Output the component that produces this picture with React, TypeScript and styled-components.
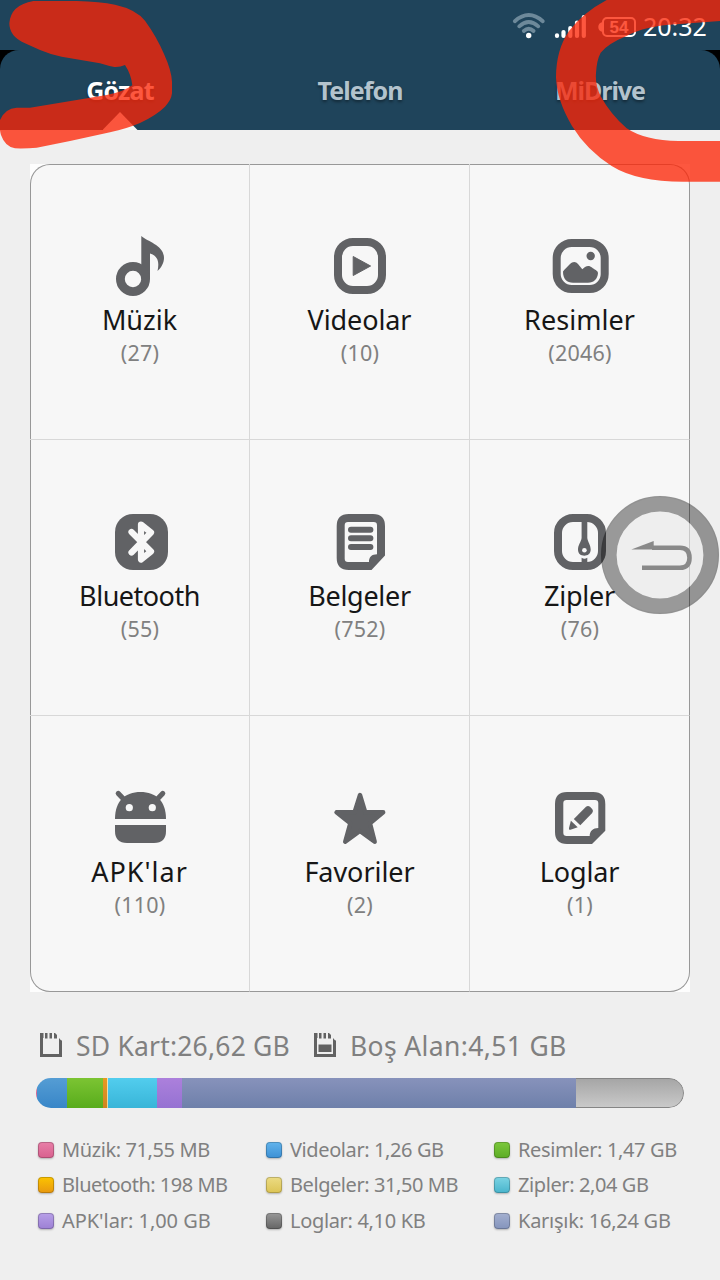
import React from "react";
import styled, { createGlobalStyle } from "styled-components";

const GlobalStyle = createGlobalStyle`
  * { box-sizing: border-box; }
  body { margin: 0; background: #efefef; font-family: "Noto Sans", "Open Sans", sans-serif; }
`;

const INK = "#616265";
const PAPER = "#f7f7f7";

const Screen = styled.div`
  position: relative;
  width: 720px;
  height: 1280px;
  overflow: hidden;
  background: #efefef;
`;

const StatusBar = styled.header`
  display: flex;
  justify-content: flex-end;
  height: 50px;
  padding-right: 11px;
  background: #1f445b;
`;

const StatusIcons = styled.svg`
  display: block;
  width: 130px;
  height: 50px;
`;

const Clock = styled.span`
  width: 66px;
  margin-left: 1px;
  font-size: 25px;
  line-height: 52px;
  color: #fff;
  white-space: nowrap;
`;

const TabBack = styled.div`
  height: 80px;
  background: #000;
`;

const Tabs = styled.nav`
  display: grid;
  grid-template-columns: repeat(3, 240px);
  height: 80px;
  border-radius: 19px 19px 0 0;
  background: #1f445b;
`;

const Tab = styled.div<{ $active?: boolean; $ls: number }>`
  display: flex;
  flex-direction: column;
  align-items: center;
  justify-content: space-between;
  padding-top: 20px;
  font-size: 25px;
  font-weight: 700;
  line-height: 40px;
  letter-spacing: ${(p) => p.$ls}px;
  color: ${(p) => (p.$active ? "#fff" : "#b3c3cd")};
  text-shadow: 0 2px 3px rgba(0, 0, 0, 0.4);
`;

const Pointer = styled.div`
  width: 35px;
  height: 18px;
  background: #f6f6f6;
  clip-path: polygon(50% 0, 100% 100%, 0 100%);
`;

const PanelBack = styled.main`
  width: 660px;
  margin: 34px auto 0;
  background: #fdfdfd;
`;

const Panel = styled.div`
  display: grid;
  grid-template-columns: repeat(3, 220px);
  grid-auto-rows: 276px;
  border-radius: 20px;
  background: ${PAPER};
  box-shadow: inset 0 0 0 1px #989898;
`;

const Tile = styled.div<{ $right: boolean; $bottom: boolean }>`
  display: flex;
  flex-direction: column;
  align-items: center;
  padding-top: 70px;
  border-right: 1px solid ${(p) => (p.$right ? "#d8d8d8" : "transparent")};
  border-bottom: 1px solid ${(p) => (p.$bottom ? "#d8d8d8" : "transparent")};
`;

const TileIcon = styled.svg`
  display: block;
  width: 64px;
  height: 64px;
`;

const TileName = styled.div<{ $ls: number }>`
  margin-top: 2px;
  font-size: 27px;
  line-height: 40px;
  letter-spacing: ${(p) => p.$ls}px;
  color: #161616;
`;

const TileCount = styled.div`
  padding-left: 1px;
  font-size: 21.5px;
  line-height: 26px;
  letter-spacing: 0.2px;
  color: #808080;
`;

const Totals = styled.section`
  display: flex;
  padding: 34px 0 0 39px;
`;

const Total = styled.div<{ $w: number; $ls: number }>`
  display: flex;
  gap: 13px;
  width: ${(p) => p.$w}px;
  font-size: 26.5px;
  line-height: 40px;
  letter-spacing: ${(p) => p.$ls}px;
  color: #808080;
  white-space: nowrap;
`;

const CardSvg = styled.svg`
  display: block;
  flex: none;
  width: 24px;
  height: 26px;
  margin-top: 6px;
`;

const UsageBar = styled.div`
  display: flex;
  width: 648px;
  height: 30px;
  margin: 12px 0 0 36px;
  border-radius: 15px;
  overflow: hidden;
`;

const Segment = styled.div<{ $w: number; $from: string; $to: string }>`
  width: ${(p) => p.$w}px;
  flex: none;
  background: linear-gradient(${(p) => p.$from}, ${(p) => p.$to});
`;

const FreeSegment = styled.div`
  flex: 1;
  border: 1px solid #858585;
  border-left: 0;
  border-radius: 0 15px 15px 0;
  background: linear-gradient(#a6a6a6, #c9c9c9);
`;

const Legend = styled.section`
  display: grid;
  grid-template-columns: repeat(3, 228px);
  grid-auto-rows: 35.5px;
  padding: 24px 0 0 38px;
`;

const LegendItem = styled.div<{ $ls: number }>`
  display: flex;
  align-items: center;
  gap: 8px;
  font-size: 20px;
  line-height: 34px;
  letter-spacing: ${(p) => p.$ls}px;
  color: #808080;
  white-space: nowrap;
`;

const Swatch = styled.i<{ $from: string; $to: string }>`
  width: 16px;
  height: 16px;
  border-radius: 4px;
  background: linear-gradient(${(p) => p.$from}, ${(p) => p.$to});
  box-shadow: inset 0 0 0 1px rgba(0, 0, 0, 0.2), 0 1px 2px rgba(0, 0, 0, 0.25);
`;

const FloatingBack = styled.svg`
  position: absolute;
  left: 600px;
  top: 495px;
  width: 120px;
  height: 120px;
`;

const Marker = styled.svg`
  position: absolute;
  left: 0;
  top: 0;
  width: 720px;
  height: 190px;
  pointer-events: none;
`;

const ring = { fill: "none", stroke: INK, strokeWidth: 8 };

const icons: Record<string, React.ReactNode> = {
  music: (
    <g fill={INK}>
      <path d="M33.3 2C40 8 56 11 56 24C56 29 53 34 49.5 37C51.5 28 50 22 42 19.5V45H33.3Z" />
      <circle cx="25" cy="45" r="12.6" fill="none" stroke={INK} strokeWidth="8.8" />
    </g>
  ),
  video: (
    <g>
      <rect x="10" y="8" width="44" height="48" rx="15" {...ring} />
      <path d="M25.2 22.5L42.6 32L25.2 41.5Z" fill={INK} stroke={INK} strokeWidth="1" strokeLinejoin="round" />
    </g>
  ),
  image: (
    <g>
      <rect x="8.7" y="9" width="48" height="46" rx="15" {...ring} />
      <circle cx="42.7" cy="22" r="4.2" fill={INK} />
      <path
        fill={INK}
        d="M15 37.5C16.5 35 19.5 33 22 30C24.5 27.2 28 27.2 30 30L34.3 35.2L37 33C39.5 31.4 42 31.7 44 33.5C46 35.5 50 36.5 50 39C49.5 45 46 48.7 40 48.7H25C19 48.7 15 45.5 15 37.5Z"
      />
    </g>
  ),
  bluetooth: (
    <g>
      <rect x="7" y="4" width="53" height="56" rx="18" fill={INK} />
      <path
        d="M23.5 22L43 41.5L33 49.5V14.5L43 22.5L23.5 42.5"
        fill="none"
        stroke={PAPER}
        strokeWidth="6.2"
        strokeLinecap="round"
        strokeLinejoin="round"
      />
    </g>
  ),
  document: (
    <g>
      <path
        fillRule="evenodd"
        fill={INK}
        d="M20.7 4H45Q57 4 57 16V45.5L43.5 60H20.7Q8.7 60 8.7 48V16Q8.7 4 20.7 4ZM20 12Q16.7 12 16.7 15.3V48.7Q16.7 52 20 52H41C40.8 47 44 44.3 49 44.3V15.3Q49 12 45.7 12Z"
      />
      <path d="M23 19.7H42.4M23 28.3H42.4M23 37H42.4" stroke={INK} strokeWidth="6" strokeLinecap="round" />
    </g>
  ),
  zip: (
    <g>
      <rect x="10" y="8" width="44" height="48" rx="15" {...ring} />
      <path
        fill={INK}
        d="M33.6 11H39.3V28C39.8 32 42.7 35 42.7 39.5C42.7 44 39.5 45.7 36.4 45.7C33 45.7 30 44 30 39.5C30 35 33.1 32 33.6 28Z"
      />
      <circle cx="36.4" cy="40.3" r="2.3" fill={PAPER} />
      <path fill={INK} d="M33.6 47.8Q36.4 49.5 39.3 47.8V53H33.6Z" />
    </g>
  ),
  android: (
    <g fill={INK}>
      <path d="M7 33C7 15 17 6 32.5 6C48 6 58 15 58 33Z" />
      <path d="M7 39H58V45Q58 57 46 57H19Q7 57 7 45Z" />
      <path d="M10.3 7.5L17 14.5M54.7 7.5L48 14.5" stroke={INK} strokeWidth="5.2" strokeLinecap="round" />
      <circle cx="21.3" cy="21.7" r="3.6" fill={PAPER} />
      <circle cx="44.3" cy="21.7" r="3.6" fill={PAPER} />
    </g>
  ),
  star: (
    <path
      fill={INK}
      stroke={INK}
      strokeWidth="4.4"
      strokeLinejoin="round"
      d="M32 9L37.3 26.3H55.2L42 37.3L46.7 55.8L31.9 45L17.2 55.8L22.3 37.3L8.5 26.3H26.5Z"
    />
  ),
  log: (
    <g fill={INK}>
      <path
        fillRule="evenodd"
        d="M19 6H45.3Q57.3 6 57.3 18V44.7L44 58H19Q7 58 7 46V18Q7 6 19 6ZM18.6 14Q15.3 14 15.3 17.3V46.7Q15.3 50 18.6 50H41.7C41.7 45 45 42 50.3 42V17.3Q50.3 14 47 14Z"
      />
      <path d="M22.9 34.8L29.7 41.2L22.5 43.8Q20.5 44.2 21 42Z" />
      <path d="M25.8 33L38 20.8Q40 19 42 20.8L44.2 23Q45.8 25 44.2 27L32.3 39.2Z" />
    </g>
  ),
};

const tiles = [
  { icon: "music", name: "Müzik", count: 27, ls: 0 },
  { icon: "video", name: "Videolar", count: 10, ls: -0.1 },
  { icon: "image", name: "Resimler", count: 2046, ls: 0.05 },
  { icon: "bluetooth", name: "Bluetooth", count: 55, ls: -0.5 },
  { icon: "document", name: "Belgeler", count: 752, ls: -0.3 },
  { icon: "zip", name: "Zipler", count: 76, ls: -0.2 },
  { icon: "android", name: "APK'lar", count: 110, ls: 1 },
  { icon: "star", name: "Favoriler", count: 2, ls: -0.05 },
  { icon: "log", name: "Loglar", count: 1, ls: -0.15 },
];

const segments = [
  { w: 1, from: "#d8709c", to: "#c85c8c" },
  { w: 30, from: "#559dd4", to: "#3886c8" },
  { w: 35.5, from: "#7cc433", to: "#58ac1c" },
  { w: 4.5, from: "#e89a22", to: "#d08420" },
  { w: 1, from: "#f3e3b0", to: "#e8d898" },
  { w: 49, from: "#52cdee", to: "#38b5d8" },
  { w: 24.5, from: "#ac80dc", to: "#9572d2" },
  { w: 394.5, from: "#8792bb", to: "#6e80aa" },
];

const legend = [
  { text: "Müzik: 71,55 MB", from: "#e87fa8", to: "#d8608e", ls: -0.4 },
  { text: "Videolar: 1,26 GB", from: "#62b4ec", to: "#3c90d4", ls: -0.4 },
  { text: "Resimler: 1,47 GB", from: "#7cc83c", to: "#5cac24", ls: -0.35 },
  { text: "Bluetooth: 198 MB", from: "#fcc400", to: "#e89810", ls: -0.5 },
  { text: "Belgeler: 31,50 MB", from: "#ecdc84", to: "#dcc454", ls: -0.43 },
  { text: "Zipler: 2,04 GB", from: "#7cd4e4", to: "#48b4cc", ls: -0.4 },
  { text: "APK'lar: 1,00 GB", from: "#b8a0e8", to: "#9c80d4", ls: -0.05 },
  { text: "Loglar: 4,10 KB", from: "#989898", to: "#646464", ls: -0.33 },
  { text: "Karışık: 16,24 GB", from: "#a4b0d0", to: "#8494bc", ls: -0.25 },
];

const MemoryCard = ({ used }: { used?: boolean }) => (
  <CardSvg viewBox="0 0 24 26">
    <path d="M2.5 1V23.5H21.5V8.5" fill="none" stroke="#626262" strokeWidth="3" />
    <path d="M1 1H4.5V6H1ZM6 1H8.5V6.5H6ZM10.5 1H13V6.5H10.5ZM15 1H16L18 3V6.5H15ZM20 6L23 9.5H20Z" fill="#626262" />
    {used && <path d="M5.5 12.5H18.5V20H5.5Z" fill="#626262" />}
  </CardSvg>
);

export default function App() {
  return (
    <Screen>
      <GlobalStyle />
      <StatusBar>
        <StatusIcons viewBox="512 0 130 50">
          <g fill="none" stroke="#6d899a" strokeWidth="3.8" strokeLinecap="round">
            <path d="M514.8 21.2Q528.7 9 542.8 21.2" />
            <path d="M519.2 26.3Q528.7 17.8 538.3 26.3" />
            <path d="M523.8 31Q528.7 26.5 533.6 31" />
          </g>
          <circle cx="528.7" cy="35.5" r="2.7" fill="#fff" />
          <path
            d="M557 35.3V36M563.5 32V36M570.3 28V36M577 22.5V36M583.8 17V36"
            stroke="#fff"
            strokeWidth="4.2"
            strokeLinecap="round"
          />
          <rect x="603" y="18" width="32" height="18" rx="4" fill="none" stroke="#fff" strokeWidth="2" />
          <path d="M602.5 22V32Q598.3 31 598.3 27T602.5 22Z" fill="#fff" />
          <text x="619" y="33" textAnchor="middle" fontFamily="Liberation Sans, sans-serif" fontWeight="700" fontSize="17" fill="#fff">
            54
          </text>
        </StatusIcons>
        <Clock>20:32</Clock>
      </StatusBar>
      <TabBack>
        <Tabs>
          <Tab $active $ls={-0.8}>
            Gözat
            <Pointer />
          </Tab>
          <Tab $ls={-0.9}>Telefon</Tab>
          <Tab $ls={-1.05}>MiDrive</Tab>
        </Tabs>
      </TabBack>
      <PanelBack>
        <Panel>
          {tiles.map((t, i) => (
            <Tile key={t.name} $right={i % 3 < 2} $bottom={i < 6}>
              <TileIcon viewBox="0 0 64 64">{icons[t.icon]}</TileIcon>
              <TileName $ls={t.ls}>{t.name}</TileName>
              <TileCount>({t.count})</TileCount>
            </Tile>
          ))}
        </Panel>
      </PanelBack>
      <Totals>
        <Total $w={274} $ls={0.2}>
          <MemoryCard />
          SD Kart:26,62 GB
        </Total>
        <Total $w={260} $ls={0.36}>
          <MemoryCard used />
          Boş Alan:4,51 GB
        </Total>
      </Totals>
      <UsageBar>
        {segments.map((s) => (
          <Segment key={s.from} $w={s.w} $from={s.from} $to={s.to} />
        ))}
        <FreeSegment />
      </UsageBar>
      <Legend>
        {legend.map((l) => (
          <LegendItem key={l.text} $ls={l.ls}>
            <Swatch $from={l.from} $to={l.to} />
            {l.text}
          </LegendItem>
        ))}
      </Legend>
      <FloatingBack viewBox="600 495 120 120">
        <circle cx="660" cy="555" r="43.5" fill="#e8e8e8" fillOpacity="0.6" />
        <circle cx="660" cy="555" r="51.2" fill="none" stroke="#000" strokeOpacity="0.38" strokeWidth="15.6" />
        <circle cx="660" cy="555" r="58.5" fill="none" stroke="#000" strokeOpacity="0.05" strokeWidth="1.5" />
        <path d="M652 547.7H680Q689.5 547.7 689.5 557.7T680 567.8H642" fill="none" stroke="#898989" strokeWidth="4.6" />
        <path d="M631.3 549.5L653.7 541V549.5Z" fill="#898989" />
      </FloatingBack>
      <Marker viewBox="0 0 2160 570">
        <g fill="#fd2405" fillOpacity="0.77">
          <path d="M100 3H230Q300 5 345 14Q408 28 435 62Q470 110 492 162Q514 210 516 245V280Q514 300 495 320Q470 345 420 369Q380 386 330 397L210 423L110 443Q80 446 45 445Q15 440 3 405Q-3 385 0 360Q15 325 50 323H90L230 300L320 285Q370 276 397 256Q393 222 375 195Q360 202 343 201Q325 198 300 190L185 170Q150 163 120 150L75 130Q28 110 28 70Q32 15 100 3Z" />
          <path d="M1840 -10Q1755 30 1707 93Q1668 150 1668 232Q1670 300 1716 378Q1760 450 1835 498Q1910 545 2050 545H2170V423H2035Q1935 422 1880 385Q1830 340 1803 290Q1785 255 1788 220Q1790 180 1802 158Q1825 130 1880 108Q1935 78 2030 73L2170 62V-10Z" />
        </g>
      </Marker>
    </Screen>
  );
}
